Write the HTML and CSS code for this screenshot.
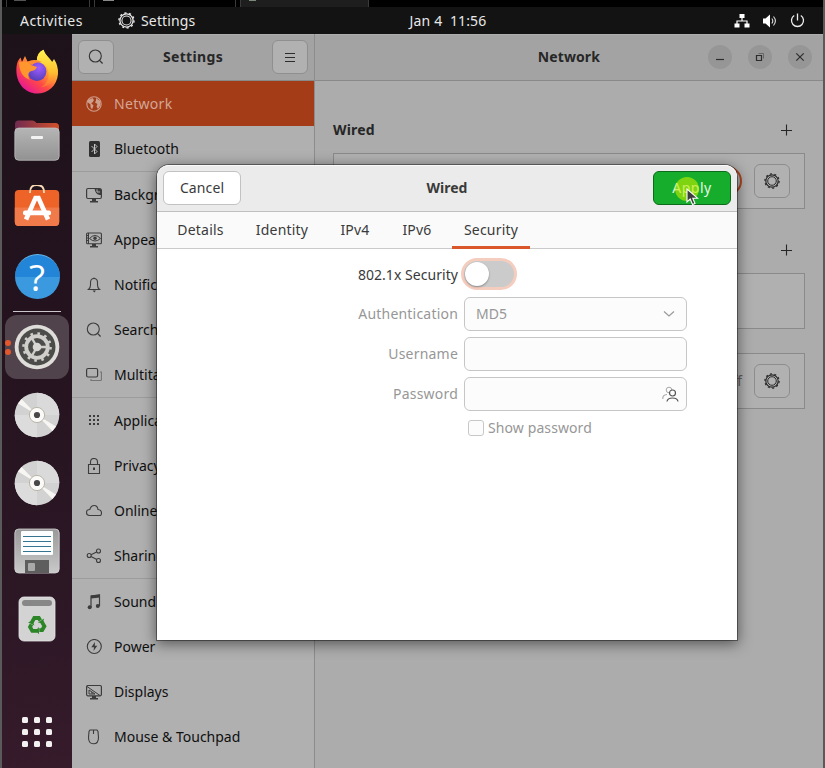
FILE: index.html
```html
<!DOCTYPE html>
<html lang="en">
<head>
<meta charset="utf-8">
<title>Settings</title>
<link rel="stylesheet" href="styles.css">
</head>
<body>
<svg class="defs" width="0" height="0" aria-hidden="true">
  <defs>
    <symbol id="gear" viewBox="0 0 16 16">
      <circle cx="8" cy="8" r="6.2" fill="none" stroke="currentColor" stroke-width="1.2"/>
      <circle cx="8" cy="8" r="4.3" fill="none" stroke="currentColor" stroke-width="1"/>
      <circle cx="8" cy="8" r="7.1" fill="none" stroke="currentColor" stroke-width="1.3" stroke-dasharray="2 2.46"/>
    </symbol>
    <symbol id="search" viewBox="0 0 16 16">
      <circle cx="7.3" cy="7" r="6" fill="none" stroke="currentColor" stroke-width="1.1"/>
      <path d="M11.5 11.3 14.6 14.5" stroke="currentColor" stroke-width="1.2"/>
    </symbol>
    <symbol id="plus" viewBox="0 0 12 12"><path d="M6.500 .5v11M1 6.500h11" stroke="currentColor" stroke-width="1.1"/></symbol>
    <symbol id="disc" viewBox="0 0 46 46">
      <circle cx="23" cy="23" r="22.3" fill="#d2d2d2"/>
      <path d="M23 23 23 .7A22.3 22.3 0 0 1 45.3 23z" fill="#dadada"/>
      <path d="M23 23 .7 23A22.3 22.3 0 0 0 23 45.3z" fill="#dcdcdc"/>
      <path d="M23 23 4 11.4 7.6 7zM23 23 42 34.6 38.4 39z" fill="#f8f6f3"/>
      <circle cx="23" cy="23" r="7.6" fill="#fbfaf8" stroke="#b9b6a8"/>
      <circle cx="23" cy="23" r="3.1" fill="#484848"/>
    </symbol>
  </defs>
</svg>

<div class="screen">
  <div class="host-tabs">
    <div class="host-tab tab-a"><i></i></div>
    <div class="host-tab tab-b"><i></i></div>
    <div class="host-tab tab-c"><i></i></div>
  </div>

  <header class="topbar">
    <span class="activities">Activities</span>
    <span class="appmenu"><svg width="17" height="17"><use href="#gear"/></svg><span>Settings</span></span>
    <span class="clock">Jan 4&nbsp; 11:56</span>
    <span class="tray">
      <svg width="16" height="14" viewBox="0 0 16 14"><path d="M5.5 0h5v4h-5zM.5 9.5h5v4h-5zM10.5 9.500h5v4h-5z" fill="#fff"/><path d="M8 4v3M3 10V7h10v3" fill="none" stroke="#fff" stroke-width="1.2"/></svg>
      <svg width="16" height="14" viewBox="0 0 16 14"><path d="M1 4.500h2.500L8 .5v13L3.500 9.500H1z" fill="#fff"/><path d="M9.800 4.500q2 2.500 0 5M11.500 2.500q3.800 4.500 0 9" fill="none" stroke="#ddd" stroke-width="1.100"/></svg>
      <svg width="15" height="15" viewBox="0 0 15 15"><path d="M4.200 2.500a6 6 0 1 0 6.600 0M7.500.5v7" fill="none" stroke="#eee" stroke-width="1.300"/></svg>
    </span>
  </header>

  <div class="desktop">
    <nav class="dock">
      <div class="dock-item">
        <svg width="46" height="46" viewBox="0 0 46 46">
          <defs>
            <linearGradient id="fx1" x1=".85" y1=".1" x2=".2" y2=".95"><stop offset="0" stop-color="#fff04a"/><stop offset=".35" stop-color="#ffa52e"/><stop offset=".65" stop-color="#ff4a45"/><stop offset="1" stop-color="#e5149a"/></linearGradient>
            <radialGradient id="fx2" cx=".6" cy=".3" r=".8"><stop offset="0" stop-color="#a05cff"/><stop offset="1" stop-color="#4b3bb0"/></radialGradient>
            <linearGradient id="fx3" x1=".5" y1="0" x2=".5" y2="1"><stop offset="0" stop-color="#fff450"/><stop offset=".6" stop-color="#ffc030"/><stop offset="1" stop-color="#ff6a3a"/></linearGradient>
          </defs>
          <path d="M2.500 18Q3 12 6.500 8.500L8 13 11 7 13.500 12.500 23 11Q23 4 29.500.8C31 6 35 9 37.500 14L40 10Q44.500 17 44 25C43 37 34 44.500 23 44.500S1 35 2.500 18z" fill="url(#fx1)"/>
          <path d="M23 13Q22 4 29.500.8C31 7 40 11 42 22 43 31 35 38 27 38 34 34 36 28 34 21Q32 14 23 13z" fill="url(#fx3)"/>
          <circle cx="23" cy="22.500" r="9.400" fill="url(#fx2)"/>
          <path d="M5 13Q14 11 17 16L23 18Q22 21.500 16 22.500Q12.500 26 16 31Q5 27 5 13z" fill="#ff962e"/>
          <path d="M13 13Q20 9 28 13Q21 13 18 16z" fill="#ff8c30"/>
        </svg>
      </div>
      <div class="dock-item">
        <svg width="46" height="46" viewBox="0 0 46 46">
          <defs><linearGradient id="fo1"><stop offset="0" stop-color="#702a50"/><stop offset="1" stop-color="#d3502b"/></linearGradient><linearGradient id="fo2" x1="0" y1="0" x2="0" y2="1"><stop offset="0" stop-color="#b5b5b5"/><stop offset="1" stop-color="#929292"/></linearGradient></defs>
          <path d="M1 7q0-3.500 3.500-3.500h14q2 0 3 1.500l1 1h19q3.500 0 3.500 3.500V20H1z" fill="url(#fo1)"/>
          <rect x=".8" y="11" width="44.400" height="32.300" rx="4" fill="url(#fo2)" stroke="#c6c6c6" stroke-width=".7"/>
          <rect x="17" y="19" width="12" height="3" rx="1" fill="#f3f3f3"/>
        </svg>
      </div>
      <div class="dock-item">
        <svg width="46" height="46" viewBox="0 0 46 46">
          <rect x=".8" y="5" width="44.400" height="36" rx="4" fill="#ee6328"/>
          <path d="M.8 22.500h44.400v14.500a4 4 0 0 1-4 4H4.800a4 4 0 0 1-4-4z" fill="#f07a49"/>
          <path d="M16 8V7q0-7 7-7T30 7v1" fill="none" stroke="#f6d8b4" stroke-width="1.800"/>
          <path d="M12 34.500 21.500 13h3L34 34.500" fill="none" stroke="#fff" stroke-width="4.600"/>
          <rect x="9" y="25.500" width="28" height="4.800" rx="2" fill="#fff"/>
        </svg>
      </div>
      <div class="dock-item"><div class="help">?</div></div>
      <div class="dock-sep"></div>
      <div class="dock-item active">
        <svg width="46" height="46" viewBox="0 0 46 46">
          <circle cx="23" cy="23" r="22.300" fill="#deddda"/>
          <circle cx="23" cy="23" r="18.500" fill="#4c4c4a"/>
          <circle cx="23" cy="23" r="13.500" fill="none" stroke="#cfcecb" stroke-width="2.600" stroke-dasharray="2.600 4.470"/>
          <circle cx="23" cy="23" r="10.800" fill="none" stroke="#cfcecb" stroke-width="3.800"/>
          <path d="M23 23H34M23 23 17.500 13.500M23 23 17.500 32.500" stroke="#cfcecb" stroke-width="2.400"/>
          <circle cx="23" cy="23" r="4.300" fill="#d8d7d4"/>
        </svg>
      </div>
      <div class="dock-item"><svg width="46" height="46"><use href="#disc"/></svg></div>
      <div class="dock-item"><svg width="46" height="46"><use href="#disc"/></svg></div>
      <div class="dock-item">
        <svg width="46" height="46" viewBox="0 0 46 46">
          <defs><linearGradient id="fl" x1="0" y1="0" x2="0" y2="1"><stop offset="0" stop-color="#999"/><stop offset="1" stop-color="#c9c9c9"/></linearGradient></defs>
          <rect x=".8" y="1" width="44.400" height="44" rx="4" fill="url(#fl)" stroke="#d4d4d4" stroke-width=".8"/>
          <rect x="7" y="3" width="32" height="24" rx="1" fill="#fbfdfe"/>
          <path d="M9 8.500h28M9 13.500h28M9 18.500h28M9 23.500h28" stroke="#35748e"/>
          <path d="M11 32h24v13H11z" fill="#5e5e5e"/><rect x="14" y="35" width="7" height="8" rx="1" fill="#a9a9a9"/>
        </svg>
      </div>
      <div class="dock-item">
        <svg width="38" height="46" viewBox="0 0 38 46">
          <rect x="1" y="1" width="36" height="44" rx="5" fill="#d3d3d3" stroke="#e4e4e4" stroke-width=".8"/>
          <rect x="4" y="4" width="30" height="6" rx="3" fill="#878787"/>
          <g fill="none" stroke="#2c8527" stroke-width="3.800">
            <g id="arm"><path d="M13.700 26.600 16.300 22h4.500l1.500 2.500"/><path d="M19.800 26.400 24.800 27.300 26 22.600z" fill="#2c8527" stroke="none"/></g>
            <use href="#arm" transform="rotate(120 19 29)"/><use href="#arm" transform="rotate(240 19 29)"/>
          </g>
        </svg>
      </div>
      <div class="dock-item apps"><div class="app-grid"><i></i><i></i><i></i><i></i><i></i><i></i><i></i><i></i><i></i></div></div>
    </nav>

    <aside class="sidebar">
      <div class="headerbar">
        <button class="hbtn"><svg width="16" height="16"><use href="#search"/></svg></button>
        <b class="w-settings">Settings</b>
        <button class="hbtn"><svg width="12" height="12" viewBox="0 0 12 12"><path d="M1 2.500h10M1 6.500h10M1 10.500h10" stroke="#2c2c2c" stroke-width="1.100"/></svg></button>
      </div>
      <div class="rows">
        <div class="row selected"><svg width="16" height="16" viewBox="0 0 16 16"><circle cx="8" cy="8" r="7.200" fill="none" stroke="currentColor" stroke-width="1.100"/><path d="M2 4 6.500 2 8 4 6.500 6.500 5 7 7.500 9.500 6 13.500 4.500 11V8.500L2 6.500zM10 2 14 5 14.500 9 12 13 10.500 10.500 11.500 8 9 6.500 10 4.500z" fill="currentColor"/></svg><span>Network</span></div>
        <div class="row"><svg width="16" height="16" viewBox="0 0 16 16"><rect x="3" y="0" width="11" height="16" rx="1.500" fill="#2f2f2f"/><path d="M5.500 5 11 10.500 8.500 13V3L11 5.500 5.500 11" fill="none" stroke="#c4c4c4"/></svg><span>Bluetooth</span></div>
        <hr>
        <div class="row covered"><svg width="16" height="16" viewBox="0 0 16 16"><path d="M9 1.500H2Q.6 1.500.6 3v7Q.6 11.500 2 11.500h12q1.400 0 1.400-1.500V7" fill="none" stroke="currentColor" stroke-width="1.200"/><path d="M8.500 1H13.500Q16 1 16 3.500V8h-2.500Q9 7 8.500 1z" fill="currentColor"/><path d="M11 2.300v2.700h3" stroke="#b0b0b0" fill="none"/><path d="M6 12h4v2h2v1.500H4V14h2z" fill="currentColor"/></svg><span>Background</span></div>
        <div class="row covered"><svg width="16" height="16" viewBox="0 0 16 16"><rect x=".6" y="1" width="14.800" height="10.800" rx="1" fill="none" stroke="currentColor" stroke-width="1.100"/><path d="M2.500 1v11M.5 3.500h2M.5 6h2M.5 8.500h2" stroke="currentColor"/><path d="M3.500 6.500Q9 .5 14.500 6.500 9 11.500 3.500 6.500z" fill="none" stroke="currentColor"/><circle cx="9" cy="6.200" r="1.700" fill="currentColor"/><path d="M6 12h4v2h2v1.500H4V14h2z" fill="currentColor"/></svg><span>Appearance</span></div>
        <div class="row"><svg width="16" height="16" viewBox="0 0 16 16"><path d="M2.500 12.500Q4.500 11 4.500 8V5.500Q4.500 1.500 8 1.500T11.500 5.500V8Q11.500 11 13.500 12.500z" fill="none" stroke="currentColor" stroke-width="1.100"/><path d="M6.500 13.500h3.500l-1.700 2z" fill="currentColor"/><path d="M8 .5v1" stroke="currentColor"/></svg><span>Notifications</span></div>
        <div class="row"><svg width="16" height="16"><use href="#search"/></svg><span>Search</span></div>
        <div class="row"><svg width="16" height="16" viewBox="0 0 16 16"><rect x=".6" y="1.500" width="11" height="8.500" rx="1.500" fill="none" stroke="currentColor" stroke-width="1.200"/><path d="M14 5h1.400v8q0 .5-1 .5H5V12" fill="none" stroke="#747474" stroke-width="1.100"/></svg><span>Multitasking</span></div>
        <hr>
        <div class="row"><svg width="16" height="16" viewBox="0 0 16 16"><path d="M3 2h2v2H3zM7 2h2v2H7zM11 2h2v2h-2zM3 6h2v2H3zM7 6h2v2H7zM11 6h2v2h-2zM3 10h2v2H3zM7 10h2v2H7zM11 10h2v2h-2z" fill="currentColor"/></svg><span>Applications</span></div>
        <div class="row"><svg width="16" height="16" viewBox="0 0 16 16"><path d="M2.500 6.500h11v9h-11zM4.500 6.500V4Q4.500.5 8 .5T11.500 4v2.500" fill="none" stroke="currentColor" stroke-width="1.100"/><path d="M7 9.500h2V12H7z" fill="currentColor"/></svg><span>Privacy</span></div>
        <div class="row"><svg width="16" height="16" viewBox="0 0 16 16"><path d="M3.500 12.500Q.5 12.500.5 9.500T3.800 6.500Q5 2.500 8.200 2.500T12 6.500Q15.500 7 15.500 10T13 12.500z" fill="none" stroke="currentColor" stroke-width="1.100"/></svg><span>Online Accounts</span></div>
        <div class="row"><svg width="16" height="16" viewBox="0 0 16 16"><g fill="none" stroke="currentColor" stroke-width="1.100"><circle cx="3.200" cy="7.500" r="2"/><circle cx="12.500" cy="3" r="2"/><circle cx="12.500" cy="12.500" r="2"/><path d="M5 6.700 10.600 3.900M5 8.500l5.800 3.100"/></g></svg><span>Sharing</span></div>
        <hr>
        <div class="row"><svg width="16" height="16" viewBox="0 0 16 16"><path d="M5 13V2l8.500-1v11" fill="none" stroke="currentColor" stroke-width="1.200"/><path d="M5 1.500 14 .5v3L5 4.500z" fill="currentColor"/><circle cx="3.700" cy="13.200" r="2" fill="currentColor"/><circle cx="11.800" cy="12" r="2" fill="currentColor"/></svg><span>Sound</span></div>
        <div class="row"><svg width="16" height="16" viewBox="0 0 16 16"><circle cx="8.300" cy="7.500" r="7" fill="none" stroke="currentColor" stroke-width="1.100"/><path d="M9 3 5.300 8.200H8L7.500 12 11.300 6.800H8.800z" fill="currentColor"/></svg><span>Power</span></div>
        <div class="row"><svg width="16" height="16" viewBox="0 0 16 16"><rect x=".6" y="1.500" width="14.800" height="10.300" rx="1.200" fill="none" stroke="currentColor" stroke-width="1.200"/><path d="M1 2.500 14 11.500M3 6v4h6zM5 8.500l1.500 1" fill="none" stroke="currentColor"/><path d="M6 12h4v2h2v1.500H4V14h2z" fill="currentColor"/></svg><span>Displays</span></div>
        <div class="row"><svg width="16" height="16" viewBox="0 0 16 16"><path d="M4 1h7l1 1.500.5 6Q12.500 14.800 7.500 14.800T2.500 8.500L3 2.500z" fill="none" stroke="currentColor" stroke-width="1.100"/><path d="M7.500 1v4" stroke="currentColor" stroke-width="1.100"/></svg><span>Mouse &amp; Touchpad</span></div>
      </div>
    </aside>

    <main class="panel">
      <div class="headerbar">
        <b class="w-network">Network</b>
        <span class="winctl">
          <i><svg width="10" height="10" viewBox="0 0 10 10"><path d="M1 7.500h8" stroke="#2d2d2d" stroke-width="1.200"/></svg></i>
          <i><svg width="10" height="10" viewBox="0 0 10 10"><path d="M1.500 3.500h5v5h-5z" fill="none" stroke="#2d2d2d" stroke-width="1.200"/><path d="M3.500 1.500h5v5" fill="none" stroke="#666"/></svg></i>
          <i><svg width="10" height="10" viewBox="0 0 10 10"><path d="m1.300 1.300 7.400 7.400M8.700 1.300 1.300 8.700" stroke="#2d2d2d" stroke-width="1.200"/></svg></i>
        </span>
      </div>
      <div class="net">
        <div class="group-title"><b>Wired</b><svg width="12" height="12"><use href="#plus"/></svg></div>
        <div class="card"><span class="on-switch"></span><button class="gearbtn"><svg width="16" height="16"><use href="#gear"/></svg></button></div>
        <div class="group-title second"><svg width="12" height="12"><use href="#plus"/></svg></div>
        <div class="card"></div>
        <div class="card last"><span class="off">Off</span><button class="gearbtn"><svg width="16" height="16"><use href="#gear"/></svg></button></div>
      </div>
    </main>
  </div>

  <section class="dialog">
    <div class="dlg-head">
      <button class="btn">Cancel</button>
      <b>Wired</b>
      <button class="btn apply">Apply
        <span class="pointer"><svg width="13" height="18" viewBox="0 0 13 18"><path d="M1 1v13l3.200-3 2.300 5.500 2.500-1L6.800 10.200H11.500z" fill="#3c3c3c" stroke="#fff" stroke-width="1.100"/></svg></span>
      </button>
    </div>
    <div class="tabs">
      <span class="tab t1">Details</span><span class="tab t2">Identity</span><span class="tab t3">IPv4</span><span class="tab t4">IPv6</span><span class="tab t5 current">Security</span>
    </div>
    <div class="form">
      <label class="strong">802.1x Security</label><div class="switch"><i></i></div>
      <label>Authentication</label><div class="field"><span>MD5</span><svg width="12" height="12" viewBox="0 0 12 12"><path d="m1 3.500 5 4.500 5-4.500" fill="none" stroke="#9a9a9a" stroke-width="1.200"/></svg></div>
      <label>Username</label><div class="field"></div>
      <label>Password</label><div class="field pw"><svg width="17" height="16" viewBox="0 0 17 16"><g fill="none"><circle cx="7" cy="4" r="2.800" stroke="#a8a8a8"/><path d="M.8 13V12Q.8 9 5 8.500" stroke="#a8a8a8" stroke-width="1.100"/><circle cx="10.500" cy="7" r="3" fill="#fcfcfc" stroke="#555" stroke-width="1.200"/><path d="M5 15.500Q5.500 12 10.500 12T16 15.500" stroke="#555" stroke-width="1.200"/></g></svg></div>
      <div class="check"><i></i><span>Show password</span></div>
    </div>
  </section>
</div>
</body>
</html>
```
FILE: styles.css
```css
* { box-sizing: border-box; }
html, body { margin: 0; height: 100%; overflow: hidden; }
body {
  background: #5a5a5a;
  font: 14px/20px "Noto Sans", "Open Sans", sans-serif;
  color: #111;
}
.defs { position: absolute; }
svg { display: block; flex: none; }
button { font: inherit; padding: 0; margin: 0; }

.screen {
  position: relative;
  width: 825px;
  height: 768px;
  display: flex;
  flex-direction: column;
  padding: 0 2px;
}

.host-tabs { height: 7px; flex: none; display: flex; background: #000; padding-left: 4px; overflow: hidden; }
.host-tab { border: 1px solid #3a3a3a; border-width: 0 1px; height: 7px; }
.host-tab i { display: block; height: 1px; background: #888; }
.tab-a { width: 84px; margin-right: 4px; }
.tab-a i { width: 12px; margin-left: 7px; background: #555; }
.tab-b { width: 142px; margin-right: 4px; }
.tab-b i { width: 11px; margin-left: 8px; }
.tab-c { width: 129px; background: #1e1e1e; }
.tab-c i { width: 7px; margin-left: 8px; background: #7c8a7c; }

.topbar {
  height: 27px;
  flex: none;
  background: #131313;
  color: #e8e8e8;
  display: grid;
  grid-template-columns: 116px 287px 86px 1fr;
  align-items: center;
}
.activities { padding-left: 18px; letter-spacing: .45px; }
.appmenu { display: flex; align-items: center; gap: 6px; letter-spacing: .15px; }
.clock { text-align: center; white-space: nowrap; letter-spacing: .15px; }
.tray { display: flex; justify-content: flex-end; align-items: center; gap: 12px; padding-right: 18px; }

.desktop { flex: 1; display: flex; min-height: 0; }

.dock {
  width: 70px;
  flex: none;
  display: flex;
  flex-direction: column;
  padding: 4px 0 2px;
  background: linear-gradient(170deg, #1e121a 0%, #24131f 40%, #2c1725 75%, #361b2b 100%);
}
.dock-item { height: 68px; flex: none; display: flex; align-items: center; justify-content: center; position: relative; }
.dock-sep { height: 3px; padding-top: 1px; margin: 0 11px; flex: none; }
.dock-sep::after { content: ""; display: block; height: 1px; background: #cbc6c9; }
.active { background: #50434c; border-radius: 12px; height: 64px; margin: 2px 3px; }
.active::before, .active::after {
  content: ""; position: absolute; left: 0; width: 6px; height: 6px; border-radius: 50%; background: #e2582c;
}
.active::before { top: 25px; }
.active::after { top: 34px; }
.help {
  width: 45px; height: 45px; border-radius: 50%;
  background: linear-gradient(#2385d7 50%, #3b99e0 50%);
  color: #fff; font: 37px/43px "Open Sans", sans-serif; text-align: center;
  border-top: 1px solid #66b5ec;
}
.apps { margin-top: auto; }
.app-grid { display: grid; grid-template-columns: repeat(3, 6px); gap: 6px; }
.app-grid i { width: 6px; height: 6px; border-radius: 1.5px; background: #f3f1f2; }

.sidebar { width: 243px; flex: none; background: #b0b0b0; border-right: 1px solid #8c8c8c; }
.headerbar {
  height: 47px;
  background: #a3a3a3;
  border-bottom: 1px solid #898989;
  border-top: 1px solid #adadad;
  padding-bottom: 1px;
  display: flex;
  align-items: center;
  color: #272727;
}
.sidebar .headerbar { justify-content: space-between; padding: 0 6px 1px; }
.w-settings { letter-spacing: .35px; }
.w-network { letter-spacing: .1px; }
.hbtn {
  width: 36px; height: 34px;
  background: #b1b1b1; border: 1px solid #8f8f8f; border-radius: 6px;
  display: flex; align-items: center; justify-content: center;
  color: #333;
}
.rows hr { margin: 0; border: 0; height: 1px; background: #9c9c9c; }
.row { height: 45px; display: flex; align-items: center; gap: 12px; padding-left: 14px; color: #3c3c3c; white-space: nowrap; }
.row span { color: #0f0f0f; }
.covered span { width: 46px; overflow: hidden; }
.row.selected { background: #a43c18; color: #cf9f8d; }
.row.selected span { color: #d4a696; letter-spacing: .3px; }

.panel { flex: 1; background: #acacac; min-width: 0; }
.panel .headerbar { justify-content: flex-end; padding-right: 11px; gap: 108px; }
.winctl { display: flex; gap: 16px; }
.winctl i { width: 24px; height: 24px; border-radius: 50%; background: #969696; display: flex; align-items: center; justify-content: center; }
.net { padding: 39px 18px 0; }
.group-title { display: flex; align-items: center; height: 20px; margin-bottom: 13px; padding-right: 13px; color: #262626; letter-spacing: .15px; }
.group-title svg { margin-left: auto; margin-top: -1px; }
.second { margin-top: 31px; }
.card {
  height: 56px; background: #b0b0b0; border: 1px solid #8a8a8a;
  display: flex; align-items: center; justify-content: flex-end; padding-right: 14px; gap: 12px;
}
.last { margin-top: 24px; }
.gearbtn { width: 36px; height: 34px; border: 1px solid #8d8d8d; border-radius: 6px; background: #b1b1b1; color: #2b2b2b; display: flex; align-items: center; justify-content: center; }
.on-switch { width: 54px; height: 30px; border-radius: 15px; border: 2px solid #b0451f; }
.off { color: #5e5e5e; }

.dialog {
  position: absolute;
  left: 157px; top: 165px;
  width: 580px; height: 475px;
  background: #fff;
  border-radius: 12px 12px 0 0;
  box-shadow: 0 0 0 1px rgba(0,0,0,.4), 0 3px 14px 1px rgba(0,0,0,.5);
  color: #3a3a3a;
}
.dlg-head {
  height: 47px; background: #ebebeb; border-bottom: 1px solid #bfbfbf; border-top: 1px solid #fafafa;
  border-radius: 12px 12px 0 0;
  display: flex; align-items: center; justify-content: space-between; padding: 0 6px 1px;
}
.btn { width: 78px; height: 34px; border: 1px solid #c2c2c2; border-radius: 6px; background: #fff; color: #3a3a3a; letter-spacing: .1px; }
.apply { background: #16ad2c; border-color: #0d6c1b; color: #e2f6e4; position: relative; letter-spacing: .5px; }
.pointer { position: absolute; left: 21px; top: 5px; width: 24px; height: 24px; border-radius: 50%; background: rgba(190, 235, 0, .62); }
.pointer svg { position: absolute; left: 11px; top: 11px; }
.tabs { height: 37px; display: flex; background: #fafafa; border-bottom: 1px solid #cacaca; padding-left: 8px; }
.tab { text-align: center; height: 37px; line-height: 35px; letter-spacing: .2px; }
.t1 { width: 71px; margin-right: 8px; }
.t2 { width: 76px; margin-right: 9px; }
.t3 { width: 52px; margin-right: 10px; }
.t4 { width: 52px; margin-right: 9px; }
.t5 { width: 78px; }
.current { border-bottom: 3px solid #d9572b; }

.form {
  display: grid;
  grid-template-columns: 301px 223px;
  grid-template-rows: 32px 34px 34px 34px 16px;
  column-gap: 6px;
  row-gap: 6px;
  padding-top: 9px;
  align-items: center;
}
.form { grid-template-rows: 33px 34px 34px 34px 18px; }
.form label { text-align: right; color: #979797; white-space: nowrap; letter-spacing: .2px; }
.form .strong { color: #3a3a3a; letter-spacing: .05px; }
.switch {
  width: 56px; height: 32px; margin-left: -3px; margin-bottom: 1px;
  border: 3px solid #f5cdbf; border-radius: 16px; background: #cbcbcb;
}
.switch i { display: block; width: 24px; height: 24px; margin: 1px; border-radius: 50%; background: #fff; box-shadow: 0 1px 2px rgba(0,0,0,.35); }
.field {
  height: 34px; border: 1px solid #c6c6c6; border-radius: 6px; background: #fcfcfc; color: #979797;
  display: flex; align-items: center; justify-content: space-between; padding: 0 11px;
}
.pw { justify-content: flex-end; padding-right: 7px; }
.check { grid-column: 2; display: flex; align-items: center; gap: 4px; padding-left: 4px; margin-top: 4px; color: #979797; letter-spacing: .1px; }
.check i { width: 16px; height: 16px; border: 1px solid #c8c8c8; border-radius: 3px; background: #fcfcfc; }
```
